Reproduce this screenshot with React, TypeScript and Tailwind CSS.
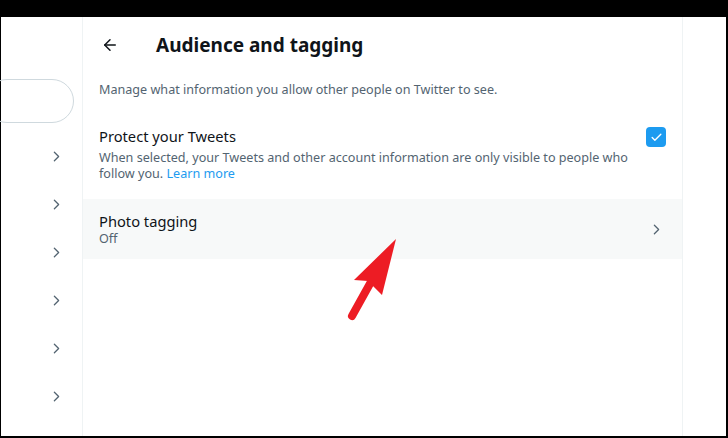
import { ArrowLeft, ChevronRight, Check } from 'lucide-react';

const font = { fontFamily: '"Noto Sans", "Open Sans", sans-serif' };

function LeftRail() {
  return (
    <div className="w-[82px] shrink-0 border-r border-[#eff3f4] flex flex-col">
      <div className="h-[62px]" />
      <div className="h-[44px] -ml-4 mr-[8px] rounded-full border border-[#cfd9de]" />
      <div className="h-[9px]" />
      {[0, 1, 2, 3, 4, 5].map((i) => (
        <div key={i} className="h-[48px] flex items-center justify-end pr-[17px]">
          <ChevronRight className="w-[17px] h-[17px] text-[#536471]" strokeWidth={1.8} />
        </div>
      ))}
    </div>
  );
}

function RedArrow() {
  return (
    <svg className="absolute left-[345px] top-[219px]" width="60" height="90" viewBox="346 236 60 90">
      <line x1="352" y1="316" x2="372" y2="280" stroke="#ed1c24" strokeWidth="8" strokeLinecap="round" />
      <polygon points="396,239 354,280 368,281 382,295" fill="#ed1c24" />
    </svg>
  );
}

export default function App() {
  return (
    <div className="w-[728px] h-[438px] bg-black pt-[17px] pl-[1px] pr-[2px] pb-[2px] overflow-hidden" style={font}>
      <div className="relative w-full h-full bg-white flex">
        <LeftRail />
        <main className="w-[600px] shrink-0 border-r border-[#eff3f4] flex flex-col">
          <div className="h-[56px] flex items-center pl-[18px]">
            <ArrowLeft className="w-[18px] h-[18px] text-[#0f1419]" strokeWidth={2} />
            <h1 className="ml-[37px] text-[19px] font-bold text-[#0f1419] leading-none">Audience and tagging</h1>
          </div>
          <p className="px-[16px] pt-[9px] text-[12.6px] text-[#536471] leading-[16px]">
            Manage what information you allow other people on Twitter to see.
          </p>
          <div className="px-[16px] pt-[28px] pb-[17px] flex">
            <div className="flex-1">
              <div className="text-[14.7px] text-[#0f1419] leading-[20px]">Protect your Tweets</div>
              <div className="mt-[4px] max-w-[530px] text-[12.6px] text-[#536471] leading-[16px]">
                When selected, your Tweets and other account information are only visible to people who follow you.{' '}
                <span className="text-[#1d9bf0]">Learn more</span>
              </div>
            </div>
            <div className="mt-[1px] w-[20px] h-[20px] rounded-[4px] bg-[#1d9bf0] flex items-center justify-center">
              <Check className="w-[13px] h-[13px] text-white" strokeWidth={2.5} />
            </div>
          </div>
          <div className="h-[60px] bg-[#f7f9f9] px-[16px] flex items-center">
            <div className="flex-1">
              <div className="text-[14.7px] text-[#0f1419] leading-[20px]">Photo tagging</div>
              <div className="text-[12.6px] text-[#536471] leading-[16px]">Off</div>
            </div>
            <ChevronRight className="w-[17px] h-[17px] text-[#536471] mr-[1px]" strokeWidth={1.8} />
          </div>
        </main>
        <div className="flex-1" />
        <RedArrow />
      </div>
    </div>
  );
}
